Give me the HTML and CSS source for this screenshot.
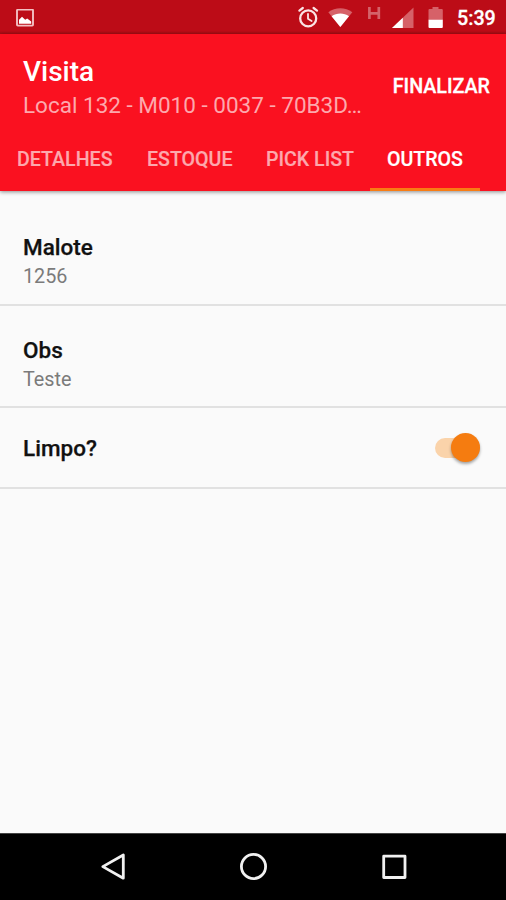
FILE: index.html
```html
<!DOCTYPE html>
<html lang="pt-BR">
<head>
<meta charset="utf-8">
<title>Visita</title>
<link rel="stylesheet" href="styles.css">
</head>
<body>
<div class="status">
  <svg class="picture" width="18" height="18" viewBox="0 0 18 18"><rect x="1" y=".6" width="16" height="16" rx=".8" fill="none" stroke="#f3c0c3" stroke-width="1.9"/><path d="M3 14.800v-4l3-3 3.200 3 2-1.400 4 3.200v2.200z" fill="#fff"/></svg>
  <svg class="system" width="160" height="26" viewBox="0 0 160 26">
    <g fill="none" stroke="#fbe3e4" stroke-width="2.300" stroke-linecap="round"><circle cx="18.200" cy="14.400" r="8"/><path d="M9.400 6.600l3.400-2.600M27 6.600l-3.400-2.600"/><path d="M18 9.900v4.900l3.600 2.200" stroke-width="1.800"/></g>
    <path d="M38.300 8.200C45 2.800 55.600 2.800 62.300 8.200L50.300 23z" fill="#d66168"/><path d="M41.600 12.200c5-3.700 12.400-3.700 17.400 0L50.300 23z" fill="#fff"/>
    <path d="M79.400 3v12M88.800 3v12M79.400 9.300h9.400" fill="none" stroke="#d4636a" stroke-width="2.700"/>
    <path d="M102 24L123.500 3.500V24z" fill="#d66168"/><path d="M102 24L112.800 13.700V24z" fill="#fff"/>
    <path d="M138.500 6q0-1 1-1h3V3h6v2h3.300q1 0 1 1v10h-14.300z" fill="#d66168"/><path d="M138.500 15.800h14.300V23q0 1-1 1h-12.300q-1 0-1-1z" fill="#fff"/>
  </svg>
  <span class="clock">5:39</span>
</div>
<header class="appbar">
  <div class="toolbar">
    <div class="heading">
      <h1>Visita</h1>
      <p>Local 132 - M010 - 0037 - 70B3D…</p>
    </div>
    <span class="action">FINALIZAR</span>
  </div>
  <nav class="tabs">
    <span class="tab t1">DETALHES</span>
    <span class="tab t2">ESTOQUE</span>
    <span class="tab t3">PICK LIST</span>
    <span class="tab t4 active">OUTROS</span>
  </nav>
</header>
<main>
  <section class="row first"><h2>Malote</h2><p>1256</p></section>
  <section class="row"><h2>Obs</h2><p>Teste</p></section>
  <section class="row toggle"><h2>Limpo?</h2><span class="switch"></span></section>
</main>
<footer class="navbar">
  <svg width="506" height="66" viewBox="0 0 506 66" fill="none" stroke="#f1f1f1" stroke-width="2.800" stroke-linejoin="round">
    <path d="M123.300 21V44.200L102.800 32.600z"/>
    <circle cx="253.500" cy="32.500" r="12.100"/>
    <rect x="383.700" y="22.200" width="21.300" height="21.300"/>
  </svg>
</footer>
</body>
</html>
```
FILE: styles.css
```css
* { box-sizing: border-box; }
body {
  margin: 0;
  height: 900px;
  display: flex;
  flex-direction: column;
  overflow: hidden;
  background: #fafafa;
  font-family: Roboto, sans-serif;
  white-space: nowrap;
}
h1, h2, p { margin: 0; }
svg { display: block; flex: none; }
.status {
  height: 34px;
  flex: none;
  display: flex;
  padding: 0 10px 0 16px;
  background: linear-gradient(#bc0c17 0 31px, #a90c14 33px);
}
.picture { margin-top: 9px; }
.system { margin: 4px 0 0 256px; }
.clock {
  margin-left: 7px;
  color: #fff;
  font-size: 19.7px;
  font-weight: 500;
  line-height: 37px;
  -webkit-text-stroke: .3px #fff;
}
.appbar {
  height: 157px;
  flex: none;
  background: #fa1120;
  color: #fff;
  box-shadow: 0 1px 4px rgba(0, 0, 0, .45);
}
.toolbar {
  height: 92px;
  padding: 20px 16px 0 23px;
  display: flex;
  justify-content: space-between;
}
h1 { font-size: 28px; font-weight: 500; line-height: 35px; }
.heading p { font-size: 22.5px; line-height: 33px; color: #fda8ad; }
.action { font-size: 19.7px; font-weight: 500; line-height: 24px; margin-top: 21px; -webkit-text-stroke: .3px; }
.tabs { display: flex; height: 65px; }
.tab {
  padding: 22px 0 0 17px;
  font-size: 19.6px;
  line-height: 24px;
  font-weight: 500;
  color: #fda8ad;
  -webkit-text-stroke: .2px;
}
.t1 { width: 130px; }
.t2 { width: 119px; }
.t3 { width: 121px; }
.t4 { width: 110px; }
.active { color: #fff; border-bottom: 3px solid #f87c14; }
.row {
  height: 102px;
  padding: 30px 26px 0 23px;
  border-bottom: 2px solid #e1e1e1;
}
.first { height: 115px; padding-top: 42px; }
h2 { font-size: 22.5px; line-height: 28px; font-weight: 500; color: #111; -webkit-text-stroke: .25px; }
.row p { font-size: 19.8px; line-height: 31px; color: #7b7b7b; }
.toggle {
  height: 81px;
  padding-top: 0;
  display: flex;
  align-items: center;
  justify-content: space-between;
}
.switch {
  position: relative;
  width: 45px;
  height: 20px;
  border-radius: 10px;
  background: #fad3aa;
}
.switch::after {
  content: "";
  position: absolute;
  right: 0;
  top: -5px;
  width: 29px;
  height: 29px;
  border-radius: 50%;
  background: #f57c10;
  box-shadow: 0 2px 3px rgba(0, 0, 0, .35);
}
.navbar {
  margin-top: auto;
  height: 67px;
  flex: none;
  background: #000;
  border-top: 1px solid #444;
}
```
